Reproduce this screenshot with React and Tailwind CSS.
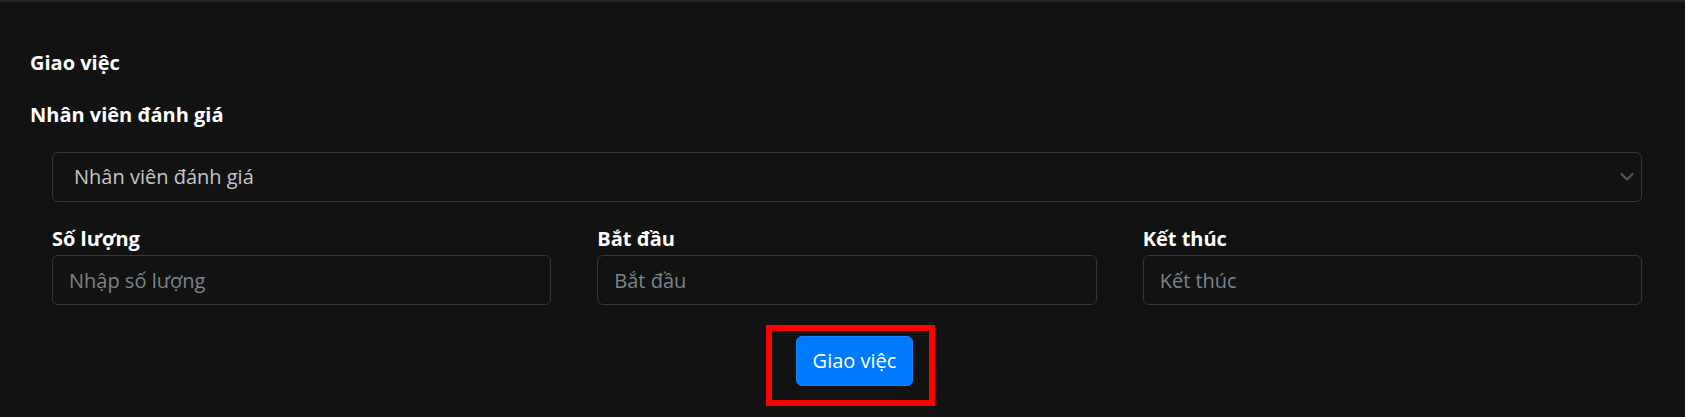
export default function App() {
  const fields = [
    { label: 'Số lượng', placeholder: 'Nhập số lượng' },
    { label: 'Bắt đầu', placeholder: 'Bắt đầu' },
    { label: 'Kết thúc', placeholder: 'Kết thúc' }
  ];

  return (
    <div
      className="min-h-screen bg-[#121212] border-t-2 border-[#212428] pl-[30px] pr-[43px] pt-[46px]"
      style={{ fontFamily: '"Open Sans", "Noto Sans", sans-serif' }}
    >
      {/* Heading */}
      <h5 className="text-[20px] leading-[30px] font-bold text-white">Giao việc</h5>
      <label className="block mt-[22px] text-[20px] leading-[30px] font-bold text-white">
        Nhân viên đánh giá
      </label>

      <div className="ml-[22px]">
        {/* Select */}
        <div className="mt-[22px] h-[50px] flex items-center justify-between rounded-md border border-[#363636] bg-[#121212] pl-[21px] pr-[7px] cursor-pointer">
          <span className="text-[20px] text-[#c3c7cb]">Nhân viên đánh giá</span>
          <svg width="14" height="10" viewBox="0 0 14 10" fill="none" stroke="#50565d" strokeWidth="2.2" strokeLinecap="round" strokeLinejoin="round">
            <path d="M1.5 2l5.5 5.5L12.5 2" />
          </svg>
        </div>

        {/* Inputs */}
        <div className="mt-[22px] grid grid-cols-3 gap-x-[46px]">
          {fields.map((f) => (
            <div key={f.label}>
              <label className="block mb-[1px] text-[20px] leading-[30px] font-bold text-white">{f.label}</label>
              <input
                type="text"
                placeholder={f.placeholder}
                className="w-full h-[50px] rounded-md border border-[#363636] bg-[#121212] px-[16px] text-[20px] text-[#c3c7cb] placeholder:text-[#7b848d] outline-none"
              />
            </div>
          ))}
        </div>

        {/* Submit */}
        <div className="mt-[20px] flex justify-center">
          <div className="ml-[7px] border-[6px] border-[#ff0000] pt-[5px] pl-[24px] pr-[16px] pb-[14px]">
            <button className="w-[117px] h-[50px] rounded-md bg-[#007bff] border border-[#1683ff] text-white text-[20px]">
              Giao việc
            </button>
          </div>
        </div>
      </div>
    </div>
  );
}
